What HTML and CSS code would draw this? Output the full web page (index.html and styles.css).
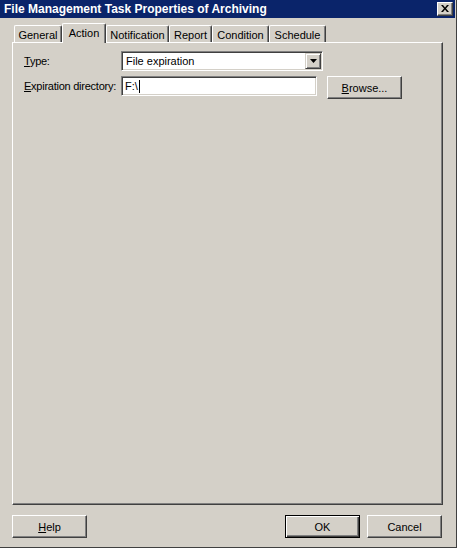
FILE: index.html
```html
<!DOCTYPE html>
<html>
<head>
<meta charset="utf-8">
<link rel="stylesheet" href="styles.css">
</head>
<body>
<div class="window">
  <div class="titlebar">
    <span class="title">File Management Task Properties of Archiving</span>
    <span class="close">
      <svg width="8" height="7" viewBox="0 0 8 7"><path d="M0 0h2l2 2.5L6 0h2L5 3.5 8 7H6L4 4.5 2 7H0l3-3.5z" fill="#000"/></svg>
    </span>
  </div>
  <div class="content">
    <div class="tabs">
      <div class="tab w-general">General</div>
      <div class="tab sel w-action">Action</div>
      <div class="tab w-notif">Notification</div>
      <div class="tab w-report">Report</div>
      <div class="tab w-cond">Condition</div>
      <div class="tab w-sched">Schedule</div>
    </div>
    <div class="panel">
      <div class="row">
        <label class="lbl"><u>T</u>ype:</label>
        <div class="combo">
          <span class="combo-text">File expiration</span>
          <span class="drop"><svg width="7" height="4" viewBox="0 0 7 4"><path d="M0 0h7L3.5 4z" fill="#000"/></svg></span>
        </div>
      </div>
      <div class="row row2">
        <label class="lbl"><u>E</u>xpiration directory:</label>
        <div class="field"><span>F:\</span><span class="caret"></span></div>
        <button class="btn browse"><u>B</u>rowse...</button>
      </div>
    </div>
    <div class="footer">
      <button class="btn"><u>H</u>elp</button>
      <div class="right">
        <button class="btn default">OK</button>
        <button class="btn">Cancel</button>
      </div>
    </div>
  </div>
</div>
</body>
</html>
```
FILE: styles.css
```css
* { box-sizing: border-box; }
html, body { margin: 0; padding: 0; background: #ffffff; }
body {
  font-family: "Liberation Sans", Arial, sans-serif;
  font-size: 11px;
  color: #000;
}
.window {
  width: 457px;
  height: 548px;
  background: #d4d0c8;
  border-right: 1px solid #404040;
  border-bottom: 1px solid #404040;
  display: flex;
  flex-direction: column;
}
.titlebar {
  height: 18px;
  background: #0a246a;
  margin-right: 1px;
  display: flex;
  align-items: center;
  justify-content: space-between;
  padding-left: 4px;
  padding-right: 2px;
}
.title {
  color: #fff;
  font-weight: bold;
  font-size: 12px;
  white-space: nowrap;
}
.close {
  width: 16px;
  height: 14px;
  background: #d4d0c8;
  border: 1px solid;
  border-color: #fff #404040 #404040 #fff;
  box-shadow: inset -1px -1px #808080;
  display: flex;
  align-items: center;
  justify-content: center;
}
.close svg { display: block; margin-left: -1px; margin-top: -1px; }
.content {
  padding: 0 13px 0 12px;
  flex: 1;
  display: flex;
  flex-direction: column;
}
.tabs {
  display: flex;
  align-items: flex-end;
  height: 20px;
  margin-top: 4px;
  padding-left: 2px;
  position: relative;
  z-index: 1;
}
.tab {
  height: 17px;
  border-top: 1px solid #fff;
  border-left: 1px solid #fff;
  border-right: 1px solid #404040;
  box-shadow: inset -1px 0 #808080;
  border-radius: 2px 2px 0 0;
  display: flex;
  align-items: center;
  justify-content: center;
  padding-top: 1px;
  white-space: nowrap;
}
.tab.sel {
  height: 20px;
  margin-bottom: -1px;
  background: #d4d0c8;
  padding-bottom: 2px;
}
.w-general { width: 48px; }
.w-action { width: 44px; }
.w-notif { width: 63px; }
.w-report { width: 43px; }
.w-cond { width: 57px; }
.w-sched { width: 57px; }
.panel {
  height: 463px;
  border: 1px solid;
  border-color: #fff #404040 #404040 #fff;
  box-shadow: inset -1px -1px #808080;
  padding: 8px 11px 0 11px;
  display: flex;
  flex-direction: column;
  gap: 5px;
}
.row {
  display: flex;
  align-items: flex-start;
}
.lbl {
  width: 97px;
  height: 20px;
  line-height: 20px;
  white-space: nowrap;
  letter-spacing: -0.25px;
}
.combo, .field {
  height: 20px;
  background: #fff;
  border: 1px solid;
  border-color: #808080 #fff #fff #808080;
  box-shadow: inset 1px 1px #404040, inset -1px -1px #d4d0c8;
  display: flex;
  align-items: center;
  padding: 2px 2px 2px 4px;
}
.combo { width: 202px; justify-content: space-between; }
.field { width: 196px; padding-left: 3px; }
.combo-text { line-height: 14px; }
.drop {
  width: 16px;
  height: 16px;
  margin-right: -1px;
  background: #d4d0c8;
  border: 1px solid;
  border-color: #d4d0c8 #404040 #404040 #d4d0c8;
  box-shadow: inset 1px 1px #fff, inset -1px -1px #808080;
  display: flex;
  align-items: center;
  justify-content: center;
}
.drop svg { display: block; }
.caret {
  display: inline-block;
  width: 1px;
  height: 13px;
  background: #000;
  margin-left: 1px;
}
.btn {
  font: inherit;
  color: #000;
  width: 75px;
  height: 23px;
  background: #d4d0c8;
  border: 1px solid;
  border-color: #fff #404040 #404040 #fff;
  box-shadow: inset -1px -1px #808080;
  padding: 0;
  margin: 0;
  display: flex;
  align-items: center;
  justify-content: center;
}
.browse { margin-left: 10px; }
.btn.default {
  border: 1px solid #000;
  box-shadow: inset 1px 1px #fff, inset -1px -1px #404040, inset -2px -2px #808080;
}
.footer {
  margin-top: 10px;
  display: flex;
  justify-content: space-between;
}
.right {
  display: flex;
  gap: 7px;
  margin-right: 1px;
}
```
